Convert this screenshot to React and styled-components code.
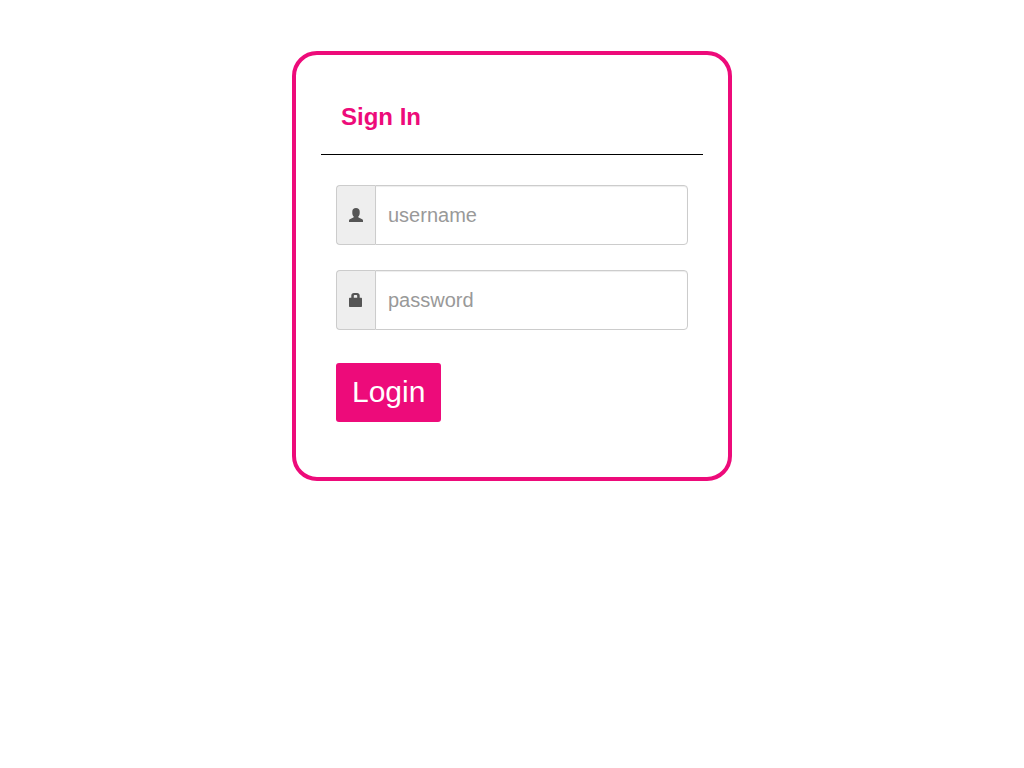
import React, { useState } from "react";
import styled, { createGlobalStyle } from "styled-components";

export default function App() {
  const [username, setUsername] = useState("");
  const [password, setPassword] = useState("");

  return (
    <Page>
      <GlobalStyle />
      <Card>
        <Title>Sign In</Title>
        <Form
          onSubmit={(e) => {
            e.preventDefault();
          }}
        >
          <InputGroup>
            <Addon htmlFor="username" aria-label="username">
              <UserIcon />
            </Addon>
            <Input
              id="username"
              type="text"
              placeholder="username"
              value={username}
              onChange={(e) => {
                setUsername(e.target.value);
              }}
            />
          </InputGroup>
          <InputGroup>
            <Addon htmlFor="password" aria-label="password">
              <LockIcon />
            </Addon>
            <Input
              id="password"
              type="password"
              placeholder="password"
              value={password}
              onChange={(e) => {
                setPassword(e.target.value);
              }}
            />
          </InputGroup>
          <Button type="submit">Login</Button>
        </Form>
      </Card>
    </Page>
  );
}

function UserIcon() {
  return (
    <svg width="14" height="14" viewBox="0 0 14 14" fill="currentColor" aria-hidden="true">
      <path d="M7 0C9.3 0 10.7 1.3 10.7 3.6V5.2C10.7 6.8 10 7.8 9.3 8.4V9.1C9.3 9.3 9.4 9.5 9.6 9.6L13.2 11.3C13.7 11.6 14 12 14 12.5V14H0V12.5C0 12 0.3 11.6 0.8 11.3L4.4 9.6C4.6 9.5 4.7 9.3 4.7 9.1V8.4C4 7.8 3.3 6.8 3.3 5.2V3.6C3.3 1.3 4.7 0 7 0Z" />
    </svg>
  );
}

function LockIcon() {
  return (
    <svg width="14" height="14" viewBox="0 0 14 14" fill="currentColor" aria-hidden="true">
      <path
        fillRule="evenodd"
        d="M2.3 4.7V2.6C2.3 1 3.4 0 4.9 0H8.1C9.6 0 10.7 1 10.7 2.6V4.7H12.3C12.7 4.7 13 5 13 5.4V13.3C13 13.7 12.7 14 12.3 14H0.7C0.3 14 0 13.7 0 13.3V5.4C0 5 0.3 4.7 0.7 4.7ZM4.8 4.7H8.2V2.7C8.2 2.2 7.9 1.9 7.4 1.9H5.6C5.1 1.9 4.8 2.2 4.8 2.7Z"
      />
    </svg>
  );
}

const GlobalStyle = createGlobalStyle`
  * {
    box-sizing: border-box;
  }

  body {
    margin: 0;
    background: #fff;
    font-family: "Liberation Sans", Arial, sans-serif;
  }
`;

const Page = styled.main`
  padding: 51px 16px;
`;

const Card = styled.section`
  max-width: 440px;
  margin: 0 auto;
  padding: 25px;
  border: 4px solid #ed0b7a;
  border-radius: 25px;
`;

const Title = styled.h1`
  margin: 0;
  padding: 23px 20px;
  border-bottom: 1px solid #000;
  color: #ed0b7a;
  font-size: 24px;
  line-height: 28px;
`;

const Form = styled.form`
  padding: 30px 15px;
`;

const InputGroup = styled.div`
  display: flex;
  height: 60px;
  margin-bottom: 25px;
`;

const Addon = styled.label`
  display: flex;
  align-items: center;
  padding: 0 12px;
  border: 1px solid #ccc;
  border-right: 0;
  border-radius: 4px 0 0 4px;
  background: #eee;
  color: #555;
`;

const Input = styled.input`
  flex: 1;
  min-width: 0;
  padding: 6px 12px;
  border: 1px solid #ccc;
  border-radius: 0 4px 4px 0;
  background: #fff;
  box-shadow: inset 0 1px 1px rgba(0, 0, 0, 0.075);
  color: #555;
  font-family: inherit;
  font-size: 20px;

  &::placeholder {
    color: #999;
    opacity: 1;
  }

  &:focus {
    border-color: #ed0b7a;
    outline: none;
  }
`;

const Button = styled.button`
  display: block;
  margin-top: 33px;
  padding: 11px 16px 13px;
  border: 0;
  border-radius: 3px;
  background: #ed0b7a;
  color: #fff;
  font-family: inherit;
  font-size: 30px;
  line-height: 35px;
  cursor: pointer;
`;
